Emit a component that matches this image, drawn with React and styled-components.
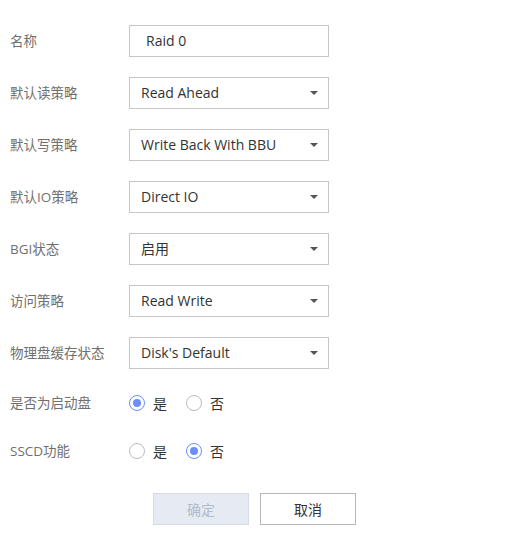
import React from 'react'
import styled, { createGlobalStyle } from 'styled-components'

const Global = createGlobalStyle`
  body {
    margin: 0;
    background: #fff;
    font-family: "Open Sans", "Noto Sans CJK SC", sans-serif;
  }
`

const Form = styled.div`
  display: flex;
  flex-direction: column;
  gap: 20px;
  padding: 25px 0 0 10px;
  width: 497px;
`

const Row = styled.div`
  display: flex;
  align-items: center;
  height: ${p => p.$h || 32}px;
`

const Label = styled.div`
  width: 119px;
  font-size: 13.5px;
  color: #707070;
  line-height: 20px;
  white-space: nowrap;
`

const Box = styled.div`
  box-sizing: border-box;
  width: 200px;
  height: 32px;
  border: 1px solid #c4c6cc;
  display: flex;
  align-items: center;
  justify-content: space-between;
  padding: 0 10px 0 ${p => p.$pl || 11}px;
  font-size: 14px;
  color: #333;
  line-height: 20px;
`

const Arrow = styled.span`
  width: 0;
  height: 0;
  border-left: 4px solid transparent;
  border-right: 4px solid transparent;
  border-top: 4px solid #555;
`

const RadioGroup = styled.div`
  display: flex;
  align-items: center;
  gap: 19px;
`

const RadioItem = styled.label`
  display: flex;
  align-items: center;
  gap: 8px;
  font-size: 14px;
  color: #333;
`

const Circle = styled.span`
  box-sizing: border-box;
  width: 16px;
  height: 16px;
  border-radius: 50%;
  border: 1px solid ${p => (p.$on ? '#6b8ff7' : '#b9bcc4')};
  display: flex;
  align-items: center;
  justify-content: center;
  &::after {
    content: '';
    width: 8px;
    height: 8px;
    border-radius: 50%;
    background: ${p => (p.$on ? '#6b8ff7' : 'transparent')};
  }
`

const Buttons = styled.div`
  display: flex;
  justify-content: center;
  gap: 11px;
  margin-top: 8px;
  padding-right: 8px;
`

const Button = styled.button`
  box-sizing: border-box;
  width: 96px;
  height: 32px;
  font-family: inherit;
  font-size: 14px;
  border: 1px solid ${p => (p.$disabled ? '#d5dbe7' : '#b4b6bc')};
  background: ${p => (p.$disabled ? '#e6eaf3' : '#fff')};
  color: ${p => (p.$disabled ? '#b3bac8' : '#333')};
  padding: 0;
`

const selects = [
  ['默认读策略', 'Read Ahead'],
  ['默认写策略', 'Write Back With BBU'],
  ['默认IO策略', 'Direct IO'],
  ['BGI状态', '启用'],
  ['访问策略', 'Read Write'],
  ['物理盘缓存状态', "Disk's Default"],
]

const Radio = ({ on, children }) => (
  <RadioItem>
    <Circle $on={on} />
    {children}
  </RadioItem>
)

export default function App() {
  return (
    <>
      <Global />
      <Form>
        <Row>
          <Label>名称</Label>
          <Box $pl={16}>Raid 0</Box>
        </Row>
        {selects.map(([l, v]) => (
          <Row key={l}>
            <Label>{l}</Label>
            <Box>
              {v}
              <Arrow />
            </Box>
          </Row>
        ))}
        <Row $h={28}>
          <Label>是否为启动盘</Label>
          <RadioGroup>
            <Radio on>是</Radio>
            <Radio>否</Radio>
          </RadioGroup>
        </Row>
        <Row $h={28}>
          <Label>SSCD功能</Label>
          <RadioGroup>
            <Radio>是</Radio>
            <Radio on>否</Radio>
          </RadioGroup>
        </Row>
        <Buttons>
          <Button $disabled>确定</Button>
          <Button>取消</Button>
        </Buttons>
      </Form>
    </>
  )
}
